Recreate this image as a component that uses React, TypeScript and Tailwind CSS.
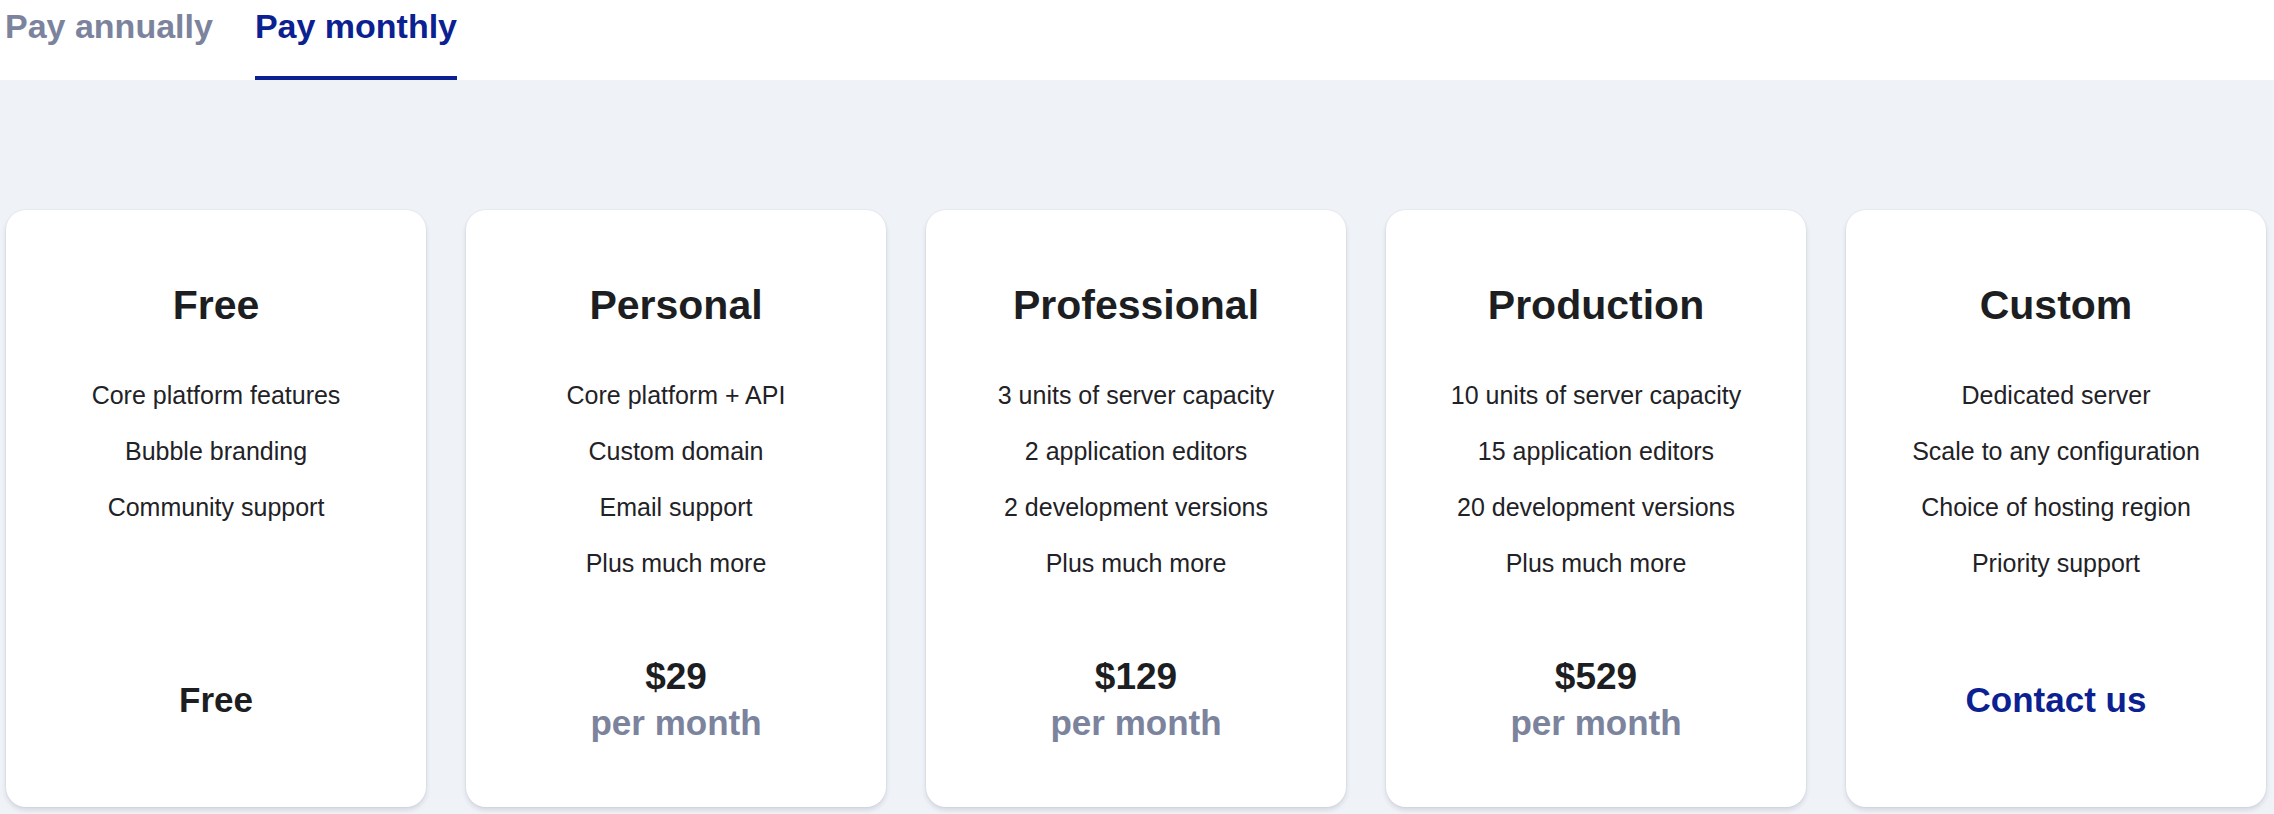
import { useState } from 'react';

type Plan = {
  name: string;
  features: string[];
  price?: string;
  note?: 'free' | 'contact';
};

const plans: Plan[] = [
  {
    name: 'Free',
    features: ['Core platform features', 'Bubble branding', 'Community support'],
    note: 'free',
  },
  {
    name: 'Personal',
    features: ['Core platform + API', 'Custom domain', 'Email support', 'Plus much more'],
    price: '$29',
  },
  {
    name: 'Professional',
    features: [
      '3 units of server capacity',
      '2 application editors',
      '2 development versions',
      'Plus much more',
    ],
    price: '$129',
  },
  {
    name: 'Production',
    features: [
      '10 units of server capacity',
      '15 application editors',
      '20 development versions',
      'Plus much more',
    ],
    price: '$529',
  },
  {
    name: 'Custom',
    features: [
      'Dedicated server',
      'Scale to any configuration',
      'Choice of hosting region',
      'Priority support',
    ],
    note: 'contact',
  },
];

const PlanCard = ({ plan }: { plan: Plan }) => {
  return (
    <div className="w-[420px] h-[597px] shrink-0 bg-white rounded-[20px] shadow-[0_3px_5px_rgba(20,30,70,0.13),0_0_0_1px_rgba(20,30,70,0.03)] flex flex-col items-center pt-[71px]">
      <h3 className="text-[41px] leading-[48px] font-bold text-[#1c1e22]">{plan.name}</h3>
      <ul className="mt-[38px] flex flex-col items-center">
        {plan.features.map((f) => (
          <li key={f} className="text-[25px] leading-[56px] text-[#1f2226]">
            {f}
          </li>
        ))}
      </ul>
      <div className="flex-1" />
      <div className="h-[207px] pb-[8px] flex flex-col items-center justify-center">
        {plan.price && (
          <>
            <div className="text-[37px] leading-[45px] font-bold text-[#1c1e22]">{plan.price}</div>
            <div className="text-[35px] leading-[47px] font-bold text-[#7b839d]">per month</div>
          </>
        )}
        {plan.note === 'free' && (
          <div className="text-[35px] leading-[47px] font-bold text-[#1c1e22]">Free</div>
        )}
        {plan.note === 'contact' && (
          <a className="text-[35px] leading-[47px] font-bold text-[#0b2191]">Contact us</a>
        )}
      </div>
    </div>
  );
};

export default function App() {
  const [tab, setTab] = useState<'annual' | 'monthly'>('monthly');

  const tabs = [
    { id: 'annual' as const, label: 'Pay annually' },
    { id: 'monthly' as const, label: 'Pay monthly' },
  ];

  return (
    <div className="w-[2274px] h-[814px] bg-[#eff2f7] font-['Liberation_Sans',Arial,sans-serif] overflow-hidden">
      <div className="h-[80px] bg-white flex items-stretch gap-[42px] pl-[5px]">
        {tabs.map((t) => (
          <button
            key={t.id}
            type="button"
            onClick={() => setTab(t.id)}
            className="flex flex-col"
          >
            <span
              className={`pt-[6px] text-[34px] leading-[40px] font-bold ${
                tab === t.id ? 'text-[#0b2191]' : 'text-[#7b839d]'
              }`}
            >
              {t.label}
            </span>
            <span className="flex-1" />
            <span className={`h-[4px] ${tab === t.id ? 'bg-[#0b2191]' : 'bg-transparent'}`} />
          </button>
        ))}
      </div>
      <div className="pt-[130px] pl-[6px] flex gap-[40px]">
        {plans.map((p) => (
          <PlanCard key={p.name} plan={p} />
        ))}
      </div>
    </div>
  );
}
